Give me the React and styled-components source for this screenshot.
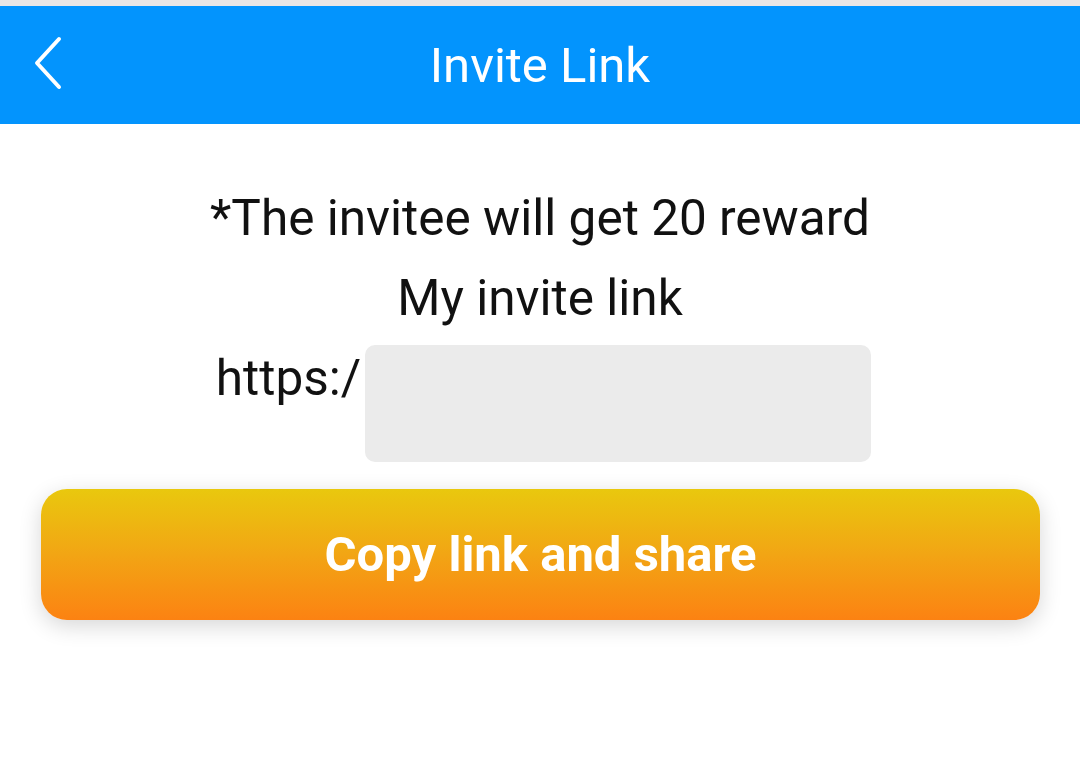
import React from 'react';
import styled, { createGlobalStyle } from 'styled-components';

const GlobalStyle = createGlobalStyle`
  html, body {
    margin: 0;
    padding: 0;
    background: #ffffff;
    font-family: Roboto, "Noto Sans", "Liberation Sans", sans-serif;
  }
  * { box-sizing: border-box; }
`;

const Page = styled.div`
  width: 1080px;
  height: 760px;
  background: #ffffff;
  border-top: 6px solid #e9e6e6;
  overflow: hidden;
`;

const Header = styled.header`
  position: relative;
  height: 118px;
  background: #0394fd;
  display: flex;
  align-items: center;
  justify-content: center;
`;

const BackButton = styled.button`
  position: absolute;
  left: 26px;
  top: 50%;
  transform: translateY(-50%);
  margin-top: -2px;
  width: 44px;
  height: 64px;
  padding: 0;
  border: none;
  background: transparent;
  display: flex;
  align-items: center;
  justify-content: center;
  cursor: pointer;
`;

const Title = styled.h1`
  margin: 0;
  color: #ffffff;
  font-size: 49px;
  font-weight: 400;
  line-height: 1;
`;

const Content = styled.main`
  display: flex;
  flex-direction: column;
  align-items: center;
  padding-top: 54px;
`;

const Line = styled.p`
  margin: 0;
  font-size: 49.5px;
  line-height: 80px;
  color: #111111;
  text-align: center;
`;

const LinkRow = styled.div`
  display: flex;
  align-items: flex-start;
  justify-content: center;
  gap: 4px;
  padding-left: 7px;
`;

const Hidden = styled.div`
  width: 506px;
  height: 117px;
  margin-top: 7px;
  border-radius: 10px;
  background: #ebebeb;
`;

const CopyButton = styled.button`
  align-self: stretch;
  margin: 27px 40px 0 41px;
  height: 131px;
  border: none;
  border-radius: 26px;
  background: linear-gradient(180deg, #e9c80e 0%, #f2a514 50%, #fc8212 100%);
  box-shadow: 0 6px 22px rgba(0, 0, 0, 0.16);
  color: #ffffff;
  font-family: Roboto, "Noto Sans", "Liberation Sans", sans-serif;
  font-size: 49px;
  font-weight: 700;
  cursor: pointer;
`;

const BackIcon = () => (
  <svg width="30" height="54" viewBox="0 0 30 54" fill="none">
    <path d="M26 3 L4 27 L26 51" stroke="#ffffff" strokeWidth="4" strokeLinecap="round" strokeLinejoin="round" />
  </svg>
);

export default function App() {
  return (
    <Page>
      <GlobalStyle />
      <Header>
        <BackButton aria-label="Back">
          <BackIcon />
        </BackButton>
        <Title>Invite Link</Title>
      </Header>
      <Content>
        <Line>*The invitee will get 20 reward</Line>
        <Line>My invite link</Line>
        <LinkRow>
          <Line>https:/</Line>
          <Hidden />
        </LinkRow>
        <CopyButton>Copy link and share</CopyButton>
      </Content>
    </Page>
  );
}
